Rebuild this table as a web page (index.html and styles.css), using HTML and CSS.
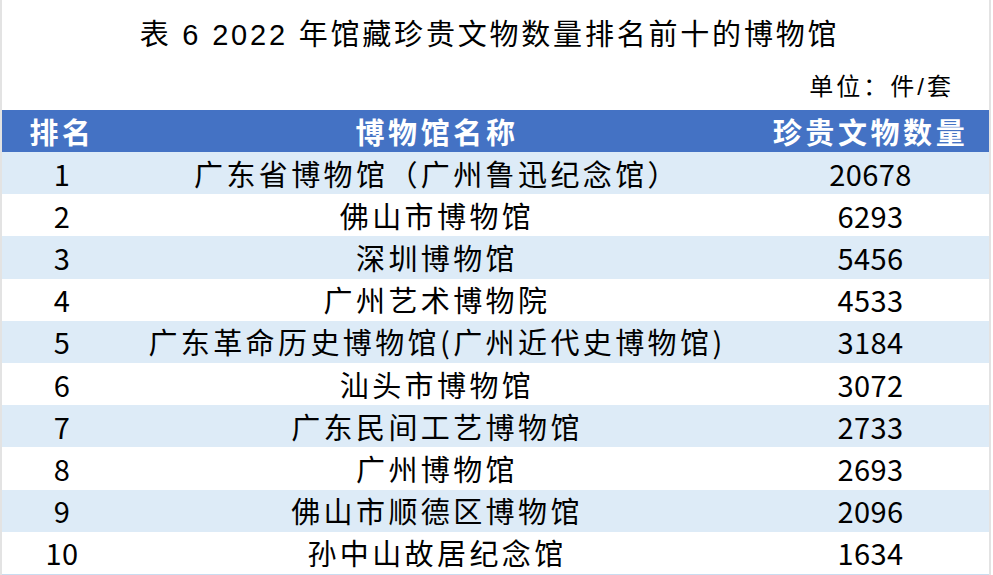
FILE: index.html
```html
<!DOCTYPE html>
<html lang="zh-CN">
<head>
<meta charset="utf-8">
<title>表 6 2022 年馆藏珍贵文物数量排名前十的博物馆</title>
<link rel="stylesheet" href="styles.css">
</head>
<body>
<div class="page">
  <div class="title">表 6 2022 年馆藏珍贵文物数量排名前十的博物馆</div>
  <div class="unit">单位：件/套</div>
  <div class="table">
    <div class="row head"><div class="c rank">排名</div><div class="c name">博物馆名称</div><div class="c num">珍贵文物数量</div></div>
    <div class="row odd"><div class="c rank">1</div><div class="c name">广东省博物馆（广州鲁迅纪念馆）</div><div class="c num">20678</div></div>
    <div class="row"><div class="c rank">2</div><div class="c name">佛山市博物馆</div><div class="c num">6293</div></div>
    <div class="row odd"><div class="c rank">3</div><div class="c name">深圳博物馆</div><div class="c num">5456</div></div>
    <div class="row"><div class="c rank">4</div><div class="c name">广州艺术博物院</div><div class="c num">4533</div></div>
    <div class="row odd"><div class="c rank">5</div><div class="c name">广东革命历史博物馆(广州近代史博物馆)</div><div class="c num">3184</div></div>
    <div class="row"><div class="c rank">6</div><div class="c name">汕头市博物馆</div><div class="c num">3072</div></div>
    <div class="row odd"><div class="c rank">7</div><div class="c name">广东民间工艺博物馆</div><div class="c num">2733</div></div>
    <div class="row"><div class="c rank">8</div><div class="c name">广州博物馆</div><div class="c num">2693</div></div>
    <div class="row odd"><div class="c rank">9</div><div class="c name">佛山市顺德区博物馆</div><div class="c num">2096</div></div>
    <div class="row last"><div class="c rank">10</div><div class="c name">孙中山故居纪念馆</div><div class="c num">1634</div></div>
  </div>
</div>
</body>
</html>
```
FILE: styles.css
```css
html, body {
  margin: 0;
  padding: 0;
  background: #ffffff;
}
.page {
  width: 987px;
  height: 575px;
  border-left: 2px solid #e3e3e3;
  border-right: 2px solid #e3e3e3;
  color: #000;
  font-family: "Noto Sans CJK SC", sans-serif;
  overflow: hidden;
}
.title {
  height: 68px;
  line-height: 70px;
  text-align: center;
  font-family: "Liberation Sans", "Noto Sans CJK SC", sans-serif;
  font-size: 29px;
  font-weight: 400;
  letter-spacing: 2.8px;
  padding-right: 12px;
}
.unit {
  height: 42px;
  line-height: 38px;
  text-align: right;
  padding-right: 35px;
  font-family: "Liberation Sans", "Noto Sans CJK SC", sans-serif;
  font-size: 24px;
  letter-spacing: 3px;
}
.table {
  display: flex;
  flex-direction: column;
}
.row {
  display: grid;
  grid-template-columns: 120px 630px 1fr;
  height: 42.2px;
  align-items: center;
  font-size: 29px;
}
.row.head {
  height: 42px;
  background: #4472c4;
  color: #ffffff;
  font-weight: 700;
}
.row.odd {
  background: #ddebf7;
}
.row.last {
  border-bottom: 2px solid #c9dcf0;
}
.c {
  text-align: center;
  white-space: nowrap;
  line-height: 1;
}
.name {
  letter-spacing: 3.4px;
}
.head .c {
  letter-spacing: 3.6px;
}
.rank, .num {
  letter-spacing: 0.4px;
}
.head .rank {
  letter-spacing: 3.6px;
}
```
